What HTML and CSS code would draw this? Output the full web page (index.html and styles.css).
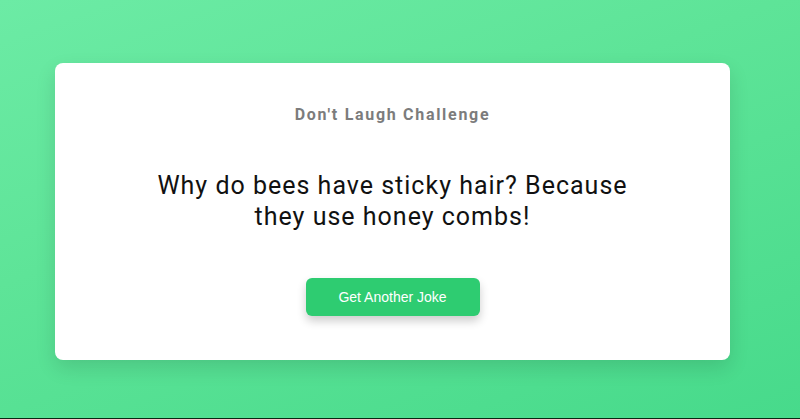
FILE: index.html
```html
<!DOCTYPE html>
<html>
<head>
<meta charset="utf-8">
<link rel="stylesheet" href="styles.css">
</head>
<body>
<div class="page">
  <div class="card">
    <h3 class="title">Don't Laugh Challenge</h3>
    <p class="joke">Why do bees have sticky hair? Because they use honey combs!</p>
    <button class="btn">Get Another Joke</button>
  </div>
</div>
</body>
</html>
```
FILE: styles.css
```css
html, body {
  margin: 0;
  padding: 0;
}
body {
  height: 418px;
  border-bottom: 1px solid #0b2614;
  overflow: hidden;
  background: linear-gradient(160deg, #6cebA5 0%, #5ee498 40%, #47da8b 100%);
  font-family: Roboto, "Liberation Sans", sans-serif;
}
.page {
  padding-top: 63px;
  padding-left: 55px;
}
.card {
  width: 675px;
  height: 297px;
  box-sizing: border-box;
  background: #fff;
  border-radius: 8px;
  box-shadow: 0 8px 20px rgba(0, 0, 0, 0.12);
  display: flex;
  flex-direction: column;
  align-items: center;
  padding-top: 42px;
}
.title {
  margin: 0;
  font-size: 16px;
  font-weight: 700;
  letter-spacing: 1.7px;
  color: #7c7c7c;
  line-height: 20px;
}
.joke {
  margin: 45px 0 0;
  width: 500px;
  text-align: center;
  font-size: 25px;
  line-height: 31px;
  letter-spacing: 1px;
  color: #111;
}
.btn {
  margin-top: 46px;
  width: 174px;
  height: 38px;
  border: none;
  border-radius: 6px;
  background: #2ecc71;
  color: #fff;
  font-family: "Liberation Sans", Arial, sans-serif;
  font-size: 14px;
  box-shadow: 0 5px 10px rgba(0, 0, 0, 0.2);
}
```
